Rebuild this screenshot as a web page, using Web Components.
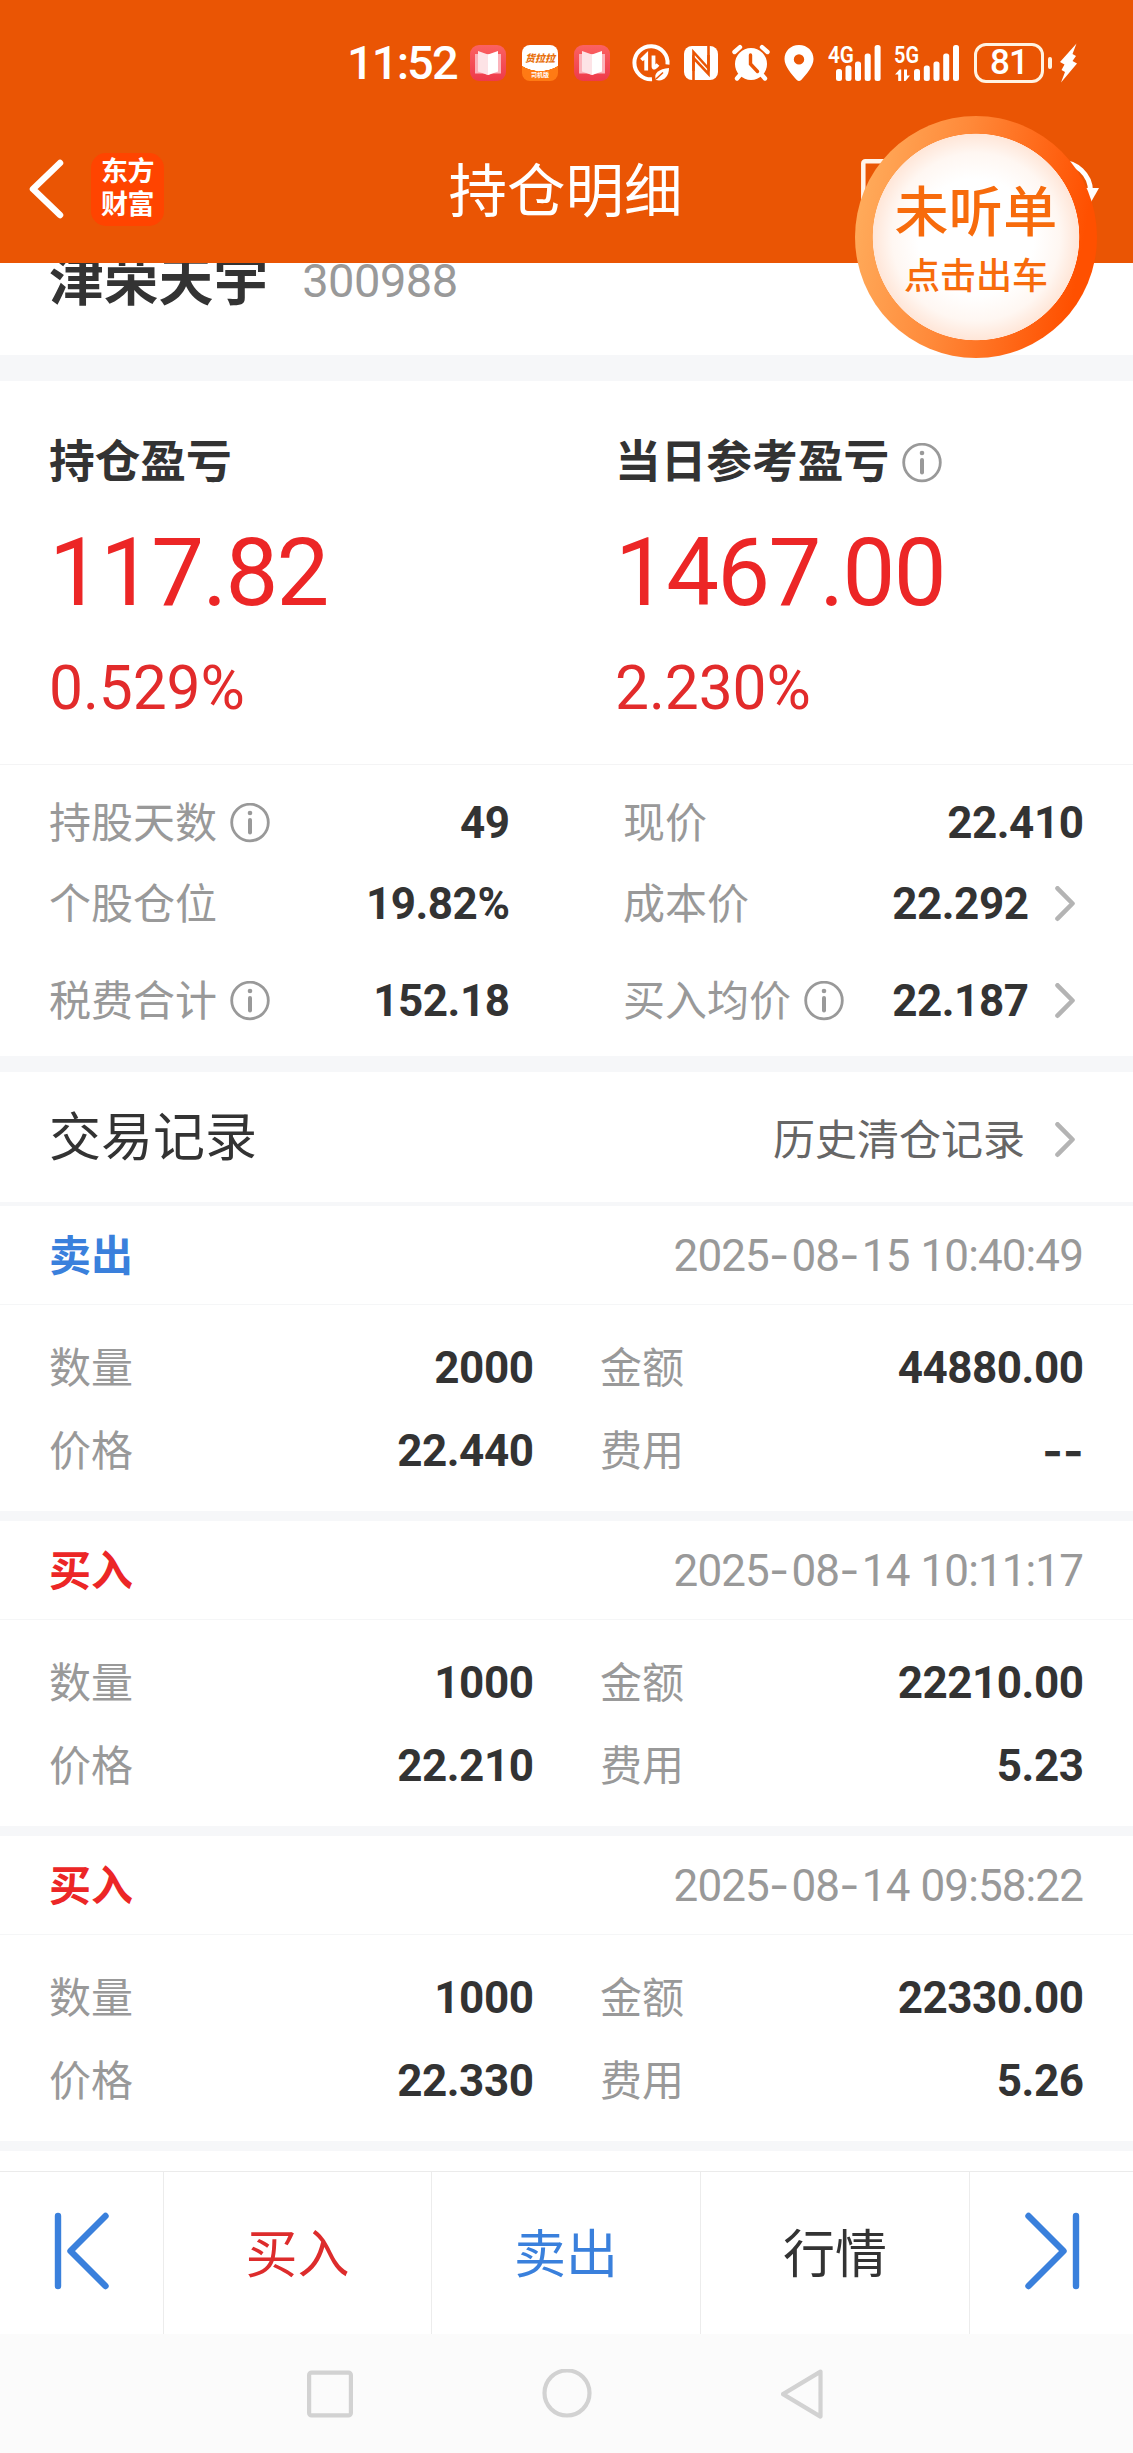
<!DOCTYPE html>
<html lang="zh-CN">
<head>
<meta charset="utf-8">
<meta name="viewport" content="width=device-width">
<title>持仓明细</title>
<style>
  body {
    margin: 0;
    background: #fff;
    color: #333;
    font-family: Roboto, "Noto Sans CJK SC", sans-serif;
    --brand: #ea5504;
    --band: #f6f7f9;
    --up: #ec2626;
    --down: #3a80dc;
    --muted: #999;
  }
</style>
</head>
<body>
<holding-page></holding-page>

<script>
function define(tagName, html, setup) {
  const template = document.createElement("template")
  template.innerHTML = html

  customElements.define(tagName, class extends HTMLElement {
    constructor() {
      super()
      this.attachShadow({ mode: "open" }).append(template.content.cloneNode(true))
    }

    connectedCallback() {
      if (setup) setup(this, this.shadowRoot)
    }
  })
}

// Roboto's hyphen is too short next to its digits, so hyphens get their own box
function setFigures(node, text) {
  node.replaceChildren(...text.split(/(-)/).filter(Boolean).map(part => {
    if (part !== "-") return part
    const dash = document.createElement("i")
    dash.textContent = part
    return dash
  }))
}

define("info-icon", `
  <style>
    :host { display: block; width: 40px; height: 40px; }
    svg { display: block; }
  </style>
  <svg width="40" height="40" viewBox="0 0 40 40" fill="none" stroke="#999">
    <circle cx="20" cy="19.500" r="18.300" stroke-width="2.800"/>
    <path d="M20 17V29.500" stroke-width="4" stroke-linecap="round"/>
    <circle cx="20" cy="10" r="2.300" fill="#999" stroke="none"/>
  </svg>
`)

define("chevron-icon", `
  <style>
    :host { display: block; width: 20px; height: 36px; }
    svg { display: block; }
  </style>
  <svg width="20" height="36" viewBox="0 0 20 36" fill="none" stroke="#b4b4b4" stroke-width="4.600" stroke-linecap="round" stroke-linejoin="round">
    <path d="M2.500 2.300L17.500 17.500L2.500 32.700"/>
  </svg>
`)

define("book-icon", `
  <style>
    :host { display: block; width: 36px; height: 36px; }
    svg { display: block; }
  </style>
  <svg width="36" height="36" viewBox="0 0 36 36">
    <defs>
      <linearGradient id="g" x1="0" y1="0" x2="0" y2="1">
        <stop offset="0" stop-color="#fb6262"/>
        <stop offset="1" stop-color="#ee3a4a"/>
      </linearGradient>
    </defs>
    <rect width="36" height="36" rx="9" fill="url(#g)"/>
    <path d="M5 9h26v19.500H22L18 30L14 28.500H5z" fill="#fbb3bb"/>
    <path d="M8 6L18 9.500V30L8 26.500z" fill="#fde3e6"/>
    <path d="M28 6L18 9.500V30L28 26.500z" fill="#fff"/>
  </svg>
`)

define("status-bar", `
  <style>
    :host {
      display: flex;
      align-items: center;
      height: 126px;
      padding-left: 347px;
      color: #fff;
      background: var(--brand);
    }
    svg { display: block; flex: none; overflow: visible; }
    .time { flex: none; width: 123px; font-size: 47px; font-weight: 500; line-height: 56px; letter-spacing: -1.900px; }
    .lala {
      display: flex;
      flex: none;
      flex-direction: column;
      align-items: center;
      gap: 4px;
      box-sizing: border-box;
      width: 36px;
      height: 36px;
      margin: 0 16px;
      padding-top: 6px;
      border-radius: 8px;
      background: radial-gradient(ellipse 30px 26px at 50% 0, #fff 99%, #ff7a14 100%);
      white-space: nowrap;
    }
    .lala b { font-size: 10px; line-height: 15px; font-weight: 900; font-style: italic; color: #e8700c; }
    .lala span { font-size: 6px; line-height: 9px; font-weight: 700; }
    .saver { margin-left: 22px; }
    .nfc { margin-left: 14px; }
    .alarm { margin-left: 14px; }
    .pin { margin-left: 14px; }
    .net { display: block; width: 54px; height: 38px; margin-left: 14px; }
    .net + .net { margin-left: 12px; width: 66px; }
    .battery {
      display: flex;
      align-items: center;
      justify-content: center;
      box-sizing: border-box;
      width: 70px;
      height: 40px;
      margin-left: 14px;
      border: 3.500px solid #fff3e2;
      border-radius: 12px;
      font-size: 35px;
      font-weight: 500;
      line-height: 40px;
      letter-spacing: -1px;
    }
    .nub { width: 4.500px; height: 12px; margin: 0 8px 0 3.500px; border-radius: 2px; background: #fff3e2; }
    text { font-family: Roboto, sans-serif; font-size: 23px; font-weight: 600; }
  </style>
  <span class="time">11:52</span>
  <book-icon></book-icon>
  <div class="lala"><b>货拉拉</b><span>司机版</span></div>
  <book-icon></book-icon>
  <svg class="saver" width="38" height="38" viewBox="0 0 38 38" fill="none" stroke="#fff">
    <path d="M35.500 20.500A16.600 16.600 0 1 0 20 35.300" stroke-width="4"/>
    <path d="M9.500 16L14.200 11.500V26.500M21.500 11.500V22.500Q21.500 25.500 26 20.500" stroke-width="3.800"/>
    <path d="M24 36C21 29 27 25 37 24C37 33 31 38 24 36z" fill="#fff" stroke="none"/>
    <path d="M24 35L31 28.500" stroke="#ea5504" stroke-width="1.500"/>
  </svg>
  <svg class="nfc" width="34" height="36" viewBox="0 0 34 36">
    <rect y="1" width="34" height="34" rx="8" fill="#fff"/>
    <path d="M9.500 35V7L24.500 23.500V10" fill="none" stroke="#ea5504" stroke-width="2.600"/>
    <path d="M24.500 1V29L9.500 13V26" fill="none" stroke="#ea5504" stroke-width="2.600"/>
  </svg>
  <svg class="alarm" width="38" height="38" viewBox="0 0 38 38" fill="none" stroke="#fff" stroke-width="4.400" stroke-linecap="round">
    <circle cx="19" cy="20" r="16" fill="#fff" stroke="none"/>
    <path d="M2.500 8L8 3.200M30 3.200L35.500 8M8 31L5 34.500M30 31L33 34.500"/>
    <path d="M18.500 11V20L25.500 27.500" stroke="#ea5504" stroke-width="3.400"/>
  </svg>
  <svg class="pin" width="30" height="38" viewBox="0 0 30 38">
    <path fill="#fff" fill-rule="evenodd" d="M15 1C6.500 1 .5 7.300 .5 15C.5 22.500 7.500 30 12.800 36Q15 38 17.200 36C22.500 30 29.500 22.500 29.500 15C29.500 7.300 23.500 1 15 1zM15 10.200a5.200 5.200 0 1 1 0 10.400a5.200 5.200 0 1 1 0-10.400z"/>
  </svg>
  <svg class="net" viewBox="0 0 54 38" fill="#fff">
    <text x="0" y="18.500" textLength="26" lengthAdjust="spacingAndGlyphs">4G</text>
    <rect x="8" y="25" width="6" height="12" rx="2.500"/>
    <rect x="17.500" y="21.500" width="6" height="15.500" rx="2.500"/>
    <rect x="27" y="17.500" width="6" height="19.500" rx="2.500"/>
    <rect x="36.700" y="9.500" width="6" height="27.500" rx="2.500"/>
    <rect x="46.600" y="1" width="6" height="36" rx="2.500"/>
  </svg>
  <svg class="net" viewBox="0 0 66 38" fill="#fff">
    <text x="0" y="18.500" textLength="25" lengthAdjust="spacingAndGlyphs">5G</text>
    <path d="M1 30.500L5.500 25.500H7.200V37H4.200V30.500zM10 25.500H13V31.500H16L11.500 37H10z"/>
    <rect x="20" y="25" width="6" height="12" rx="2.500"/>
    <rect x="29.800" y="21.500" width="6" height="15.500" rx="2.500"/>
    <rect x="39.500" y="17.500" width="6" height="19.500" rx="2.500"/>
    <rect x="49.200" y="9.500" width="6" height="27.500" rx="2.500"/>
    <rect x="59" y="1" width="6" height="36" rx="2.500"/>
  </svg>
  <div class="battery">81</div>
  <div class="nub"></div>
  <svg width="17" height="40" viewBox="0 0 17 40">
    <path d="M16.500 .5L0 19L4.500 21.500L1.500 27L5 29L1 39.500L17 20.500L12.500 18L16 13L12.500 11z" fill="#fff"/>
  </svg>
`)

define("page-header", `
  <style>
    :host {
      position: relative;
      z-index: 1;
      display: grid;
      grid-template-columns: 1fr auto 1fr;
      align-items: center;
      height: 129px;
      padding: 0 29px 8px;
      color: #fff;
      background: var(--brand);
    }
    svg { display: block; }
    .left { display: flex; align-items: center; gap: 27px; margin-top: -3px; }
    .logo {
      display: grid;
      place-content: center;
      width: 73px;
      height: 73px;
      border-radius: 15px;
      background: #ff4400;
      font-size: 27px;
      font-weight: 700;
      line-height: 33px;
      letter-spacing: -0.500px;
    }
    .logo span { display: block; }
    h1 { margin: 2px 2px 0 0; font-size: 58.500px; font-weight: 400; line-height: 68px; }
    .right { display: flex; justify-content: flex-end; gap: 117px; margin-right: 3px; }
  </style>
  <div class="left">
    <svg width="35" height="60" viewBox="0 0 35 60" fill="none" stroke="#fff" stroke-width="6.500" stroke-linecap="round" stroke-linejoin="round">
      <path d="M31 4L4 30L31 56"/>
    </svg>
    <div class="logo"><span>东方</span><span>财富</span></div>
  </div>
  <h1><slot></slot></h1>
  <div class="right">
    <svg width="54" height="64" viewBox="0 0 54 64" fill="none" stroke="#fff3ea" stroke-width="4.500">
      <rect x="2.300" y="2.300" width="48" height="58" rx="2"/>
    </svg>
    <svg width="69" height="64" viewBox="0 0 69 64" fill="none" stroke="#fff" stroke-width="5">
      <path d="M28 3.500A29 29 0 0 1 58.500 32"/>
      <path d="M51 29H67L58.500 44z" fill="#fff" stroke="none"/>
    </svg>
  </div>
`)

define("ride-bubble", `
  <style>
    :host {
      position: absolute;
      z-index: 2;
      left: 855px;
      top: 116px;
      display: flex;
      flex-direction: column;
      align-items: center;
      box-sizing: border-box;
      width: 242px;
      height: 242px;
      padding-top: 64px;
      border-radius: 50%;
      color: #f76b0c;
      background:
        radial-gradient(circle, #fff 0 58px, #fff7f2 84px, #ffe6d8 103px, transparent 103.600px),
        linear-gradient(100deg, #ffac5c 5%, #ff8a3a 40%, #ff5000 88%);
    }
    b { font-size: 54px; font-weight: 500; line-height: 68px; letter-spacing: 0.300px; }
    span { font-size: 36px; font-weight: 500; line-height: 58px; }
  </style>
  <b><slot name="title"></slot></b>
  <span><slot></slot></span>
`)

define("stock-strip", `
  <style>
    :host {
      display: flex;
      align-items: center;
      gap: 34px;
      height: 54px;
      margin-top: -9px;
      padding: 0 49px 47px;
      border-bottom: 26px solid var(--band);
    }
    b { font-size: 54.800px; line-height: 54px; }
    span { font-size: 47px; line-height: 54px; letter-spacing: -0.500px; color: var(--muted); }
  </style>
  <b><slot></slot></b>
  <span><slot name="code"></slot></span>
`)

define("profit-block", `
  <style>
    :host { display: block; color: var(--up); }
    h2 {
      display: flex;
      align-items: center;
      gap: 13px;
      margin: 0;
      color: #333;
      font-size: 45.700px;
      line-height: 60px;
    }
    .amount { margin-top: 25px; font-size: 94px; line-height: 110px; letter-spacing: -1.700px; }
    .rate { margin-top: 26px; font-size: 60.500px; line-height: 70px; letter-spacing: -0.100px; color: #e22b2b; }
    :host(:not([info])) info-icon { display: none; }
  </style>
  <h2><slot></slot><info-icon></info-icon></h2>
  <div class="amount"></div>
  <div class="rate"></div>
`, (host, root) => {
  root.querySelector(".amount").textContent = host.getAttribute("amount")
  root.querySelector(".rate").textContent = host.getAttribute("rate")
})

define("data-cell", `
  <style>
    :host { display: flex; align-items: center; font-size: 42px; line-height: 60px; }
    .label { margin-top: 1px; color: var(--muted); white-space: nowrap; }
    info-icon { margin-left: 13px; }
    .value { margin: 0 -0.500px 0 auto; font-size: 44px; font-weight: 700; letter-spacing: -0.450px; white-space: nowrap; }
    i { font-family: Inter, sans-serif; font-style: normal; letter-spacing: 0; }
    chevron-icon { margin: 0 8px 0 27px; }
    :host(:not([info])) info-icon,
    :host(:not([link])) chevron-icon { display: none; }
  </style>
  <span class="label"><slot></slot></span>
  <info-icon></info-icon>
  <span class="value"></span>
  <chevron-icon></chevron-icon>
`, (host, root) => setFigures(root.querySelector(".value"), host.getAttribute("value") || ""))

define("stats-grid", `
  <style>
    :host {
      display: grid;
      grid-template-columns: 460px 460px;
      grid-template-rows: 80px 82px 80px;
      justify-content: space-between;
      padding: 18px 50px 31px 49px;
      border-top: 1px solid #f4f4f5;
      border-bottom: 16px solid var(--band);
    }
    ::slotted(:nth-child(n + 5)) { position: relative; top: 16px; }
  </style>
  <slot></slot>
`)

define("records-title", `
  <style>
    :host {
      display: flex;
      align-items: center;
      height: 130px;
      padding: 0 58px 0 49px;
      border-bottom: 4px solid var(--band);
      font-size: 52px;
    }
    span { margin: 8px 30px 0 auto; font-size: 42px; line-height: 60px; color: #666; }
    b { margin-top: 4px; font-weight: 400; line-height: 60px; }
    chevron-icon { margin-top: 6px; }
  </style>
  <b><slot></slot></b>
  <span><slot name="link"></slot></span>
  <chevron-icon></chevron-icon>
`)

define("trade-record", `
  <style>
    :host { display: block; border-bottom: 10px solid var(--band); }
    header {
      display: flex;
      align-items: center;
      justify-content: space-between;
      height: 98px;
      padding: 0 50px 0 49px;
      border-bottom: 1px solid #f5f6f7;
      font-size: 42px;
      line-height: 60px;
    }
    b { margin-top: 3px; color: var(--up); }
    :host([side="卖出"]) b { color: var(--down); }
    time { font-size: 44px; letter-spacing: -0.900px; word-spacing: 1px; color: var(--muted); }
    i { font-family: Inter, sans-serif; font-style: normal; letter-spacing: 2.400px; }
    .grid {
      display: grid;
      grid-template-columns: 484px 483px;
      grid-template-rows: 82px 84px;
      justify-content: space-between;
      padding: 22px 50px 18px 49px;
    }
  </style>
  <header><b></b><time></time></header>
  <div class="grid">
    <data-cell class="count">数量</data-cell>
    <data-cell class="total">金额</data-cell>
    <data-cell class="price">价格</data-cell>
    <data-cell class="fee">费用</data-cell>
  </div>
`, (host, root) => {
  root.querySelector("b").textContent = host.getAttribute("side")
  setFigures(root.querySelector("time"), host.getAttribute("time"))
  for (const name of ["count", "total", "price", "fee"]) {
    const cell = root.querySelector(`.${name}`)
    setFigures(cell.shadowRoot.querySelector(".value"), host.getAttribute(name))
  }
})

define("action-bar", `
  <style>
    :host {
      display: grid;
      grid-template-columns: 163px 268px 269px 269px 1fr;
      height: 162px;
      margin-top: 20px;
      border-top: 1px solid #ebebeb;
      font-size: 52px;
      line-height: 60px;
    }
    div { display: grid; place-items: center; padding-top: 5px; }
    div + div { border-left: 1px solid #ececec; }
    svg { display: block; margin-top: -9px; }
    .buy { color: #dd2c2c; }
    .sell { color: var(--down); }
  </style>
  <div>
    <svg width="56" height="78" viewBox="0 0 56 78" fill="none" stroke="#3a80dc" stroke-width="6.400" stroke-linecap="round" stroke-linejoin="round">
      <path d="M4 4V74M51.500 4L16.500 39L51.500 74"/>
    </svg>
  </div>
  <div class="buy">买入</div>
  <div class="sell">卖出</div>
  <div>行情</div>
  <div>
    <svg width="56" height="78" viewBox="0 0 56 78" fill="none" stroke="#3a80dc" stroke-width="6.400" stroke-linecap="round" stroke-linejoin="round">
      <path d="M52 4V74M4.500 4L39.500 39L4.500 74"/>
    </svg>
  </div>
`)

define("system-nav", `
  <style>
    :host {
      display: flex;
      align-items: center;
      justify-content: center;
      gap: 189px;
      height: 119px;
      background: #fbfbfb;
    }
    svg { display: block; }
  </style>
  <svg width="46" height="50" viewBox="0 0 46 50" fill="none" stroke="#d2d2d2" stroke-width="4.200">
    <rect x="2.100" y="3.600" width="41.800" height="42.800" rx="2.500"/>
  </svg>
  <svg width="50" height="50" viewBox="0 0 50 50" fill="none" stroke="#d2d2d2" stroke-width="4.200">
    <circle cx="25" cy="24" r="22.500"/>
  </svg>
  <svg width="46" height="50" viewBox="0 0 46 50" fill="none" stroke="#d2d2d2" stroke-width="4.200" stroke-linejoin="round">
    <path d="M39.500 2.600V47.600L2 25.100z"/>
  </svg>
`)

define("holding-page", `
  <style>
    :host { position: relative; display: block; width: 1133px; height: 2453px; overflow: hidden; }
    .profit {
      display: grid;
      grid-template-columns: 566px 1fr;
      box-sizing: border-box;
      height: 383px;
      padding: 52px 0 0 49px;
    }
  </style>
  <status-bar></status-bar>
  <page-header>持仓明细</page-header>
  <ride-bubble><span slot="title">未听单</span>点击出车</ride-bubble>
  <stock-strip>津荣天宇<span slot="code">300988</span></stock-strip>
  <section class="profit">
    <profit-block amount="117.82" rate="0.529%">持仓盈亏</profit-block>
    <profit-block amount="1467.00" rate="2.230%" info>当日参考盈亏</profit-block>
  </section>
  <stats-grid>
    <data-cell value="49" info>持股天数</data-cell>
    <data-cell value="22.410">现价</data-cell>
    <data-cell value="19.82%">个股仓位</data-cell>
    <data-cell value="22.292" link>成本价</data-cell>
    <data-cell value="152.18" info>税费合计</data-cell>
    <data-cell value="22.187" info link>买入均价</data-cell>
  </stats-grid>
  <records-title>交易记录<span slot="link">历史清仓记录</span></records-title>
  <trade-record side="卖出" time="2025-08-15 10:40:49" count="2000" total="44880.00" price="22.440" fee="--"></trade-record>
  <trade-record side="买入" time="2025-08-14 10:11:17" count="1000" total="22210.00" price="22.210" fee="5.23"></trade-record>
  <trade-record side="买入" time="2025-08-14 09:58:22" count="1000" total="22330.00" price="22.330" fee="5.26"></trade-record>
  <action-bar></action-bar>
  <system-nav></system-nav>
`)
</script>
</body>
</html>
